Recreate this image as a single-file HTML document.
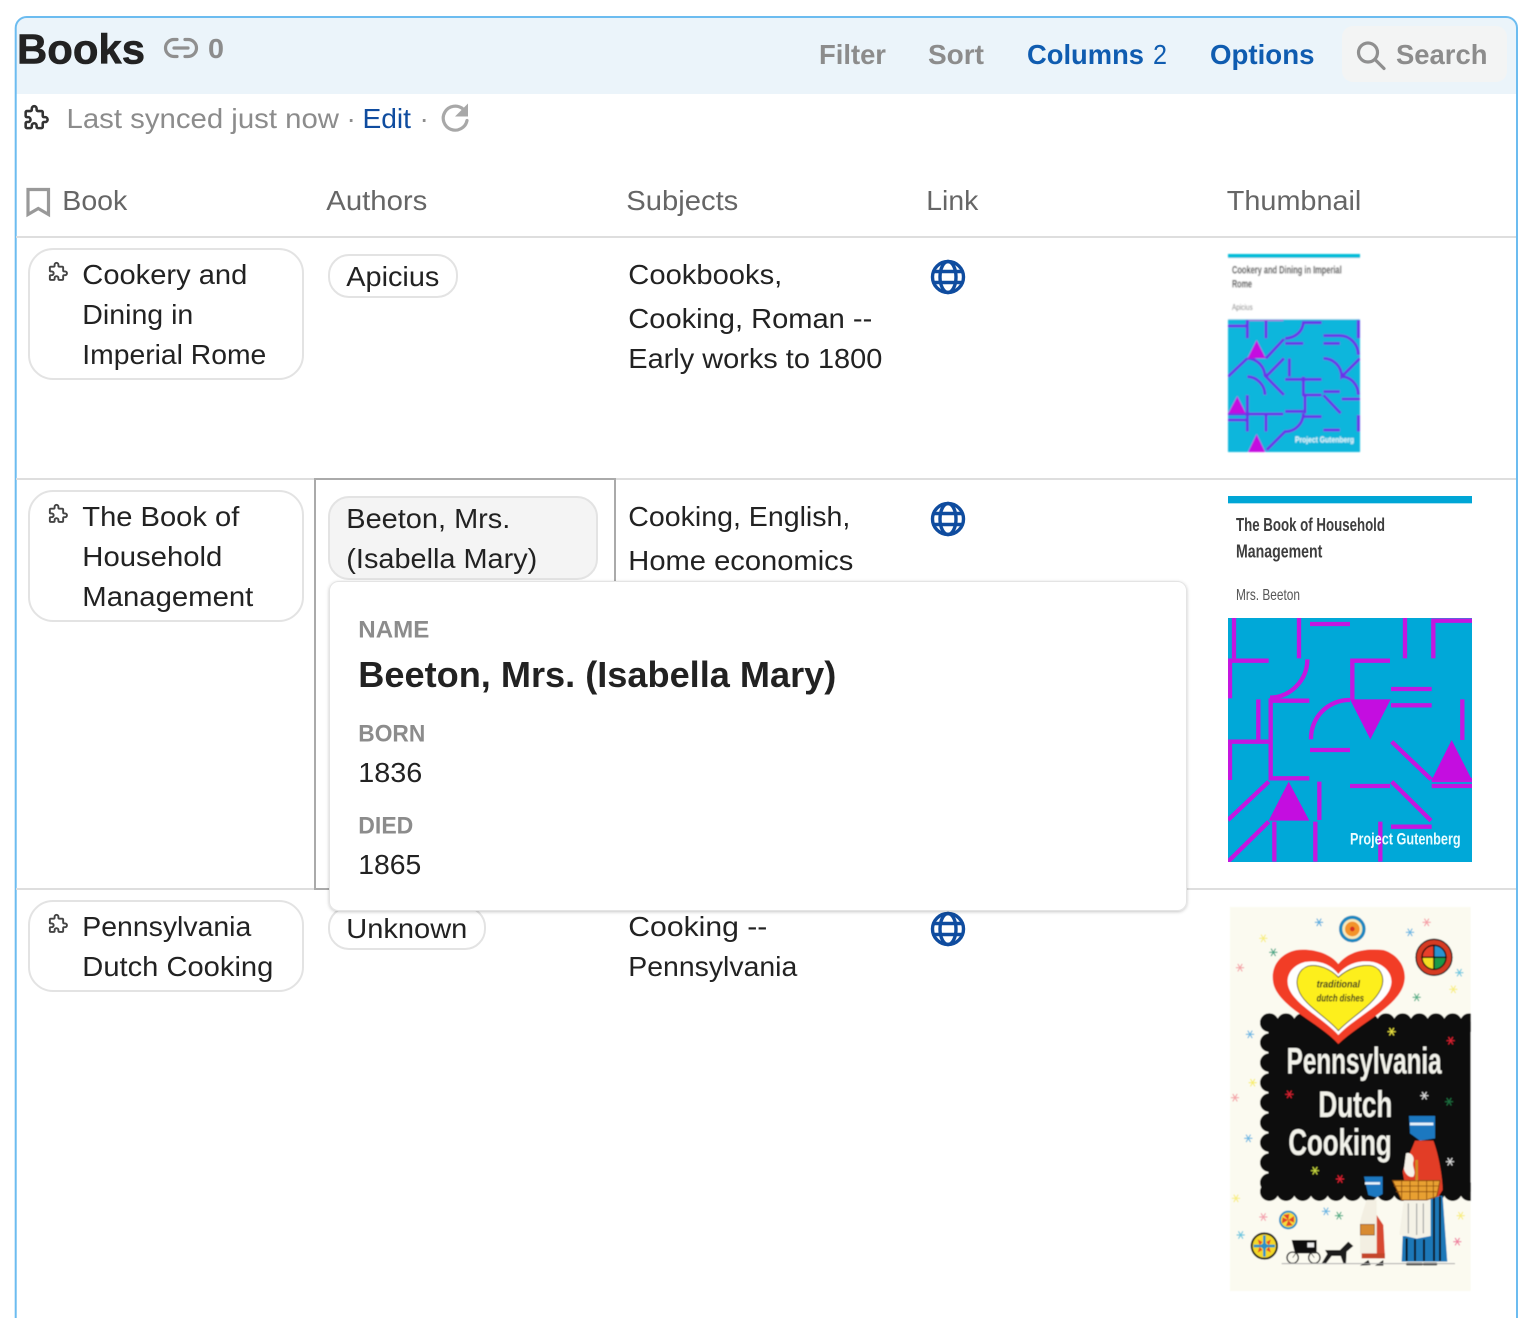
<!DOCTYPE html>
<html lang="en"><head><meta charset="utf-8"><title>Books</title>
<style>
html,body{margin:0;padding:0;background:#fff;width:1530px;height:1318px;overflow:hidden}
svg{display:block}
text{font-family:"Liberation Sans",sans-serif;white-space:pre}
.t{transform:translateX(-.7px)}
.b{font-size:28px;fill:#222}
.h{font-size:28px;fill:#666}
.g{font-size:28px;fill:#8c8c8c}
.l{font-size:24px;fill:#8c8c8c;font-weight:bold}
.i{fill:none;stroke-linecap:round;stroke-linejoin:round}
</style></head><body>
<svg width="1530" height="1318" viewBox="0 0 1530 1318" xmlns="http://www.w3.org/2000/svg">
<defs>
<path id="pz" d="M4 7h3a1 1 0 0 0 1-1v-1a2 2 0 0 1 4 0v1a1 1 0 0 0 1 1h3a1 1 0 0 1 1 1v3a1 1 0 0 0 1 1h1a2 2 0 0 1 0 4h-1a1 1 0 0 0-1 1v3a1 1 0 0 1-1 1h-3a1 1 0 0 1-1-1v-1a2 2 0 0 0-4 0v1a1 1 0 0 1-1 1h-3a1 1 0 0 1-1-1v-3a1 1 0 0 1 1-1h1a2 2 0 0 0 0-4h-1a1 1 0 0 1-1-1v-3a1 1 0 0 1 1-1"/>
<g id="gl" fill="none" stroke="#0f4c9f" stroke-width="3.400"><circle cx="0" cy="0" r="15.500"/><ellipse cx="0" cy="0" rx="8" ry="15.500"/><path d="M-14 -5.500H14M-14 5.500H14"/></g>
<g id="s" stroke-width="3.500" stroke-linecap="round"><path d="M-11 0H11M-6 -10L6 10M-6 10L6 -10"/></g>
<filter id="b0" x="-5%" y="-5%" width="110%" height="110%"><feGaussianBlur stdDeviation="2.600"/></filter>
<filter id="b1" x="-5%" y="-5%" width="110%" height="110%"><feGaussianBlur stdDeviation="1.600"/></filter>
<filter id="b2" x="-5%" y="-5%" width="110%" height="110%"><feGaussianBlur stdDeviation="1.100"/></filter>
<filter id="sh" x="-5%" y="-5%" width="110%" height="110%"><feDropShadow dx="0" dy="1" stdDeviation="1.500" flood-color="#000" flood-opacity=".22"/></filter>
<clipPath id="c1"><rect x="54" y="240" width="396" height="396"/></clipPath>
<clipPath id="c2"><rect x="54" y="414" width="732" height="732"/></clipPath>
<clipPath id="c3"><rect x="30" y="21" width="722" height="1152"/></clipPath>
</defs>

<!-- header -->
<path d="M15.500 28a11 11 0 0 1 11-11H1506a11 11 0 0 1 11 11V94H15.500Z" fill="#ebf4fa"/>
<rect x="15.700" y="17" width="1501.300" height="1330" rx="11" fill="none" stroke="#6cbcf0" stroke-width="2"/>
<g class="t">
<text x="17.700" y="63.500" font-size="42" font-weight="bold" fill="#222" stroke="#222" stroke-width=".6" textLength="128" lengthAdjust="spacingAndGlyphs">Books</text>
<text x="208.700" y="58" font-size="28" font-weight="bold" fill="#8c8c8c" textLength="16" lengthAdjust="spacingAndGlyphs">0</text>
<text x="819.700" y="64" font-size="28" font-weight="bold" fill="#8c8c8c" textLength="67" lengthAdjust="spacingAndGlyphs">Filter</text>
<text x="928.700" y="64" font-size="28" font-weight="bold" fill="#8c8c8c" textLength="56" lengthAdjust="spacingAndGlyphs">Sort</text>
<text x="1027.700" y="64" font-size="28" font-weight="bold" fill="#0f5cb0" textLength="117" lengthAdjust="spacingAndGlyphs">Columns</text>
<text x="1153.700" y="64" font-size="28" fill="#0f5cb0" textLength="14" lengthAdjust="spacingAndGlyphs">2</text>
<text x="1210.700" y="64" font-size="28" font-weight="bold" fill="#0f5cb0" textLength="104.500" lengthAdjust="spacingAndGlyphs">Options</text>
</g>
<g class="i" stroke="#8f8f8f" stroke-width="3.200"><path d="M177 39.500h-3a8.500 8.500 0 0 0 0 17h3M185 39.500h3a8.500 8.500 0 0 1 0 17h-3"/><path d="M174 48h14"/></g>
<rect x="1342" y="26" width="165" height="56" rx="11" fill="#f3f4f4"/>
<g class="i" stroke="#8f8f8f" stroke-width="3.200"><circle cx="1368" cy="52.500" r="9.500"/><path d="M1375.500 60L1384 68.500"/></g>
<text x="1396" y="64" font-size="28" font-weight="bold" fill="#8c8c8c" textLength="91.500" lengthAdjust="spacingAndGlyphs">Search</text>

<!-- sync row -->
<g transform="translate(22,102.500) scale(1.220)"><use href="#pz" class="i" stroke="#333" stroke-width="2.100"/></g>
<text x="66.500" y="128" class="g" textLength="272.500" lengthAdjust="spacingAndGlyphs">Last synced just now</text>
<text x="346.500" y="128" class="g">·</text>
<text x="362.500" y="128" font-size="28" fill="#0f4c9f" textLength="48.500" lengthAdjust="spacingAndGlyphs">Edit</text>
<text x="419.500" y="128" class="g">·</text>
<g class="i" stroke="#a8a8a8" stroke-width="3.200"><path d="M463 109A12 12 0 1 0 467 120.500"/></g>
<path d="M468 103.500V116.500H455Z" fill="#a8a8a8"/>

<!-- column headers -->
<path d="M28 189.500H48.500V214.500L38.250 208.500L28 214.500Z" fill="none" stroke="#999" stroke-width="3.200"/>
<g class="t">
<text x="63" y="210" class="h" textLength="65" lengthAdjust="spacingAndGlyphs">Book</text>
<text x="327" y="210" class="h" textLength="101" lengthAdjust="spacingAndGlyphs">Authors</text>
<text x="627" y="210" class="h" textLength="112" lengthAdjust="spacingAndGlyphs">Subjects</text>
<text x="927" y="210" class="h" textLength="52" lengthAdjust="spacingAndGlyphs">Link</text>
<text x="1227.500" y="210" class="h" textLength="134.500" lengthAdjust="spacingAndGlyphs">Thumbnail</text>
</g>
<rect x="16" y="236" width="1500" height="2" fill="#dedede"/>
<rect x="16" y="478" width="1500" height="2" fill="#dedede"/>
<rect x="16" y="888" width="1500" height="2" fill="#dedede"/>

<!-- row 1 -->
<rect x="29" y="249" width="274" height="130" rx="24" fill="#fff" stroke="#e3e3e3" stroke-width="2"/>
<g transform="translate(47,260) scale(.95)"><use href="#pz" class="i" stroke="#444" stroke-width="2"/></g>
<g class="t">
<text x="83" y="284" class="b" textLength="165" lengthAdjust="spacingAndGlyphs">Cookery and</text>
<text x="83" y="324" class="b" textLength="111" lengthAdjust="spacingAndGlyphs">Dining in</text>
<text x="83" y="364" class="b" textLength="184" lengthAdjust="spacingAndGlyphs">Imperial Rome</text>
</g>
<rect x="329" y="255" width="128" height="42" rx="20" fill="#fff" stroke="#e3e3e3" stroke-width="2"/>
<g class="t">
<text x="347" y="286" class="b" textLength="93" lengthAdjust="spacingAndGlyphs">Apicius</text>
<text x="629" y="284" class="b" textLength="154" lengthAdjust="spacingAndGlyphs">Cookbooks,</text>
<text x="629" y="328" class="b" textLength="244" lengthAdjust="spacingAndGlyphs">Cooking, Roman --</text>
<text x="629" y="368" class="b" textLength="254" lengthAdjust="spacingAndGlyphs">Early works to 1800</text>
</g>
<use href="#gl" x="948" y="277"/>

<!-- thumb 1 -->
<g transform="translate(1210,240) scale(.33333)" filter="url(#b0)">
<rect x="54" y="42" width="396" height="198" fill="#fff"/>
<rect x="54" y="42" width="396" height="12" fill="#00bcd8"/>
<text x="66" y="100" font-size="32" font-weight="bold" fill="#333" textLength="329" lengthAdjust="spacingAndGlyphs">Cookery and Dining in Imperial</text>
<text x="66" y="142" font-size="32" font-weight="bold" fill="#333" textLength="60" lengthAdjust="spacingAndGlyphs">Rome</text>
<text x="66" y="210" font-size="24" fill="#777" textLength="62" lengthAdjust="spacingAndGlyphs">Apicius</text>
<rect x="54" y="238" width="396" height="398" fill="#08b6dc"/>
<g clip-path="url(#c1)">
<path fill="none" stroke="#6a30e8" stroke-width="9" d="M54 258H110M112 240V295M168 240V295M225 295A55 50 0 0 0 280 248H335M225 310H280M340 287H390M340 310H390M390 287A55 58 0 0 1 445 345M445 240V295M54 410L112 355M168 355L222 297M112 355A55 55 0 0 1 165 410M222 355L168 410L222 465M238 355V410M225 418H335M280 410V465H335M285 465V520M340 355A55 55 0 0 1 395 410L450 355M395 410A50 55 0 0 1 445 465M112 410A55 55 0 0 1 165 465M340 455H390M395 477H450M340 465L392 520M112 465V575M54 522H220M54 540H110M168 520V575M225 514H280M280 530H335M280 520A55 55 0 0 1 225 575L170 630M445 525V575M340 570H390"/>
<path d="M115 240H220" stroke="#d418d8" stroke-width="5"/>
<path d="M112 355H168L140 300ZM54 520H108L82 468ZM112 640H168L140 582Z" fill="#c40ce0"/>
</g>
<text x="255" y="607" font-size="26" font-weight="bold" fill="#f4feff" textLength="177" lengthAdjust="spacingAndGlyphs">Project Gutenberg</text>
</g>

<!-- row 2 -->
<rect x="29" y="491" width="274" height="130" rx="24" fill="#fff" stroke="#e3e3e3" stroke-width="2"/>
<g transform="translate(47,502) scale(.95)"><use href="#pz" class="i" stroke="#444" stroke-width="2"/></g>
<g class="t">
<text x="83" y="526" class="b" textLength="157" lengthAdjust="spacingAndGlyphs">The Book of</text>
<text x="83" y="566" class="b" textLength="140" lengthAdjust="spacingAndGlyphs">Household</text>
<text x="83" y="606" class="b" textLength="171" lengthAdjust="spacingAndGlyphs">Management</text>
</g>
<rect x="315" y="479" width="300" height="410" fill="none" stroke="#aaa" stroke-width="2"/>
<rect x="329" y="497" width="268" height="82" rx="20" fill="#f4f4f4" stroke="#e3e3e3" stroke-width="2"/>
<g class="t">
<text x="347" y="528" class="b" textLength="164" lengthAdjust="spacingAndGlyphs">Beeton, Mrs.</text>
<text x="347" y="568" class="b" textLength="191" lengthAdjust="spacingAndGlyphs">(Isabella Mary)</text>
<text x="629" y="526" class="b" textLength="222" lengthAdjust="spacingAndGlyphs">Cooking, English,</text>
<text x="629" y="570" class="b" textLength="225" lengthAdjust="spacingAndGlyphs">Home economics</text>
</g>
<use href="#gl" x="948" y="519"/>

<!-- thumb 2 -->
<g transform="translate(1210,480) scale(.33333)" filter="url(#b2)">
<rect x="54" y="48" width="732" height="366" fill="#fff"/>
<rect x="54" y="48" width="732" height="22" fill="#00a6d6"/>
<text x="78" y="153" font-size="56" font-weight="bold" fill="#3c3c3c" textLength="447" lengthAdjust="spacingAndGlyphs">The Book of Household</text>
<text x="78" y="233" font-size="56" font-weight="bold" fill="#3c3c3c" textLength="259" lengthAdjust="spacingAndGlyphs">Management</text>
<text x="78" y="360" font-size="48" fill="#555" textLength="192" lengthAdjust="spacingAndGlyphs">Mrs. Beeton</text>
<rect x="54" y="414" width="732" height="732" fill="#00a8d8"/>
<g clip-path="url(#c2)">
<path fill="none" stroke="#c416e0" stroke-width="13" d="M72 414V535M267 414V535M300 432H420M585 414V535M670 535V422H786M54 542H176M60 542V655M292 538A115 115 0 0 1 180 653M180 662H298M182 655V900M145 658V780M54 785H180M60 785V900M180 895H298M427 660V542H540M543 627H665M543 676H665M757 658V780M303 778A115 115 0 0 1 420 660M300 810H420M545 785L663 898M665 918H786M420 918H540M545 905L663 1022M328 905V1020M54 1020L176 905M54 1145L176 1025M193 1025V1145M316 1025V1145M511 1025V1145M543 1040H665M665 900H786"/>
<path d="M420 658H542L481 778ZM665 900H786L725 780ZM176 1022H298L236 905Z" fill="#c40ce0"/>
</g>
<text x="420" y="1093" font-size="50" font-weight="bold" fill="#eafcff" textLength="332" lengthAdjust="spacingAndGlyphs">Project Gutenberg</text>
</g>

<!-- row 3 -->
<rect x="29" y="901" width="274" height="90" rx="24" fill="#fff" stroke="#e3e3e3" stroke-width="2"/>
<g transform="translate(47,912) scale(.95)"><use href="#pz" class="i" stroke="#444" stroke-width="2"/></g>
<g class="t">
<text x="83" y="936" class="b" textLength="169" lengthAdjust="spacingAndGlyphs">Pennsylvania</text>
<text x="83" y="976" class="b" textLength="191" lengthAdjust="spacingAndGlyphs">Dutch Cooking</text>
</g>
<rect x="329" y="907" width="156" height="42" rx="20" fill="#fff" stroke="#e3e3e3" stroke-width="2"/>
<g class="t">
<text x="347" y="938" class="b" textLength="121" lengthAdjust="spacingAndGlyphs">Unknown</text>
<text x="629" y="936" class="b" textLength="139" lengthAdjust="spacingAndGlyphs">Cooking --</text>
<text x="629" y="976" class="b" textLength="169" lengthAdjust="spacingAndGlyphs">Pennsylvania</text>
</g>
<use href="#gl" x="948" y="929"/>

<!-- thumb 3 -->
<g transform="translate(1220,900) scale(.33333)" filter="url(#b1)">
<rect x="30" y="21" width="722" height="1152" fill="#fbfaf0"/>
<g clip-path="url(#c3)">
<rect x="145" y="365" width="607" height="510" fill="#0a0a0a"/>
<path d="M148 368H750M148 875H750" fill="none" stroke="#0a0a0a" stroke-width="56" stroke-linecap="round" stroke-dasharray="0 50"/>
<path d="M148 368V875" fill="none" stroke="#0a0a0a" stroke-width="56" stroke-linecap="round" stroke-dasharray="0 60"/>
<path d="M355 192C390 150 440 145 490 150C540 165 562 210 552 250C535 320 420 370 355 432C300 370 175 320 160 250C150 200 180 160 230 150C280 145 330 160 355 192Z" fill="#f23c28"/>
<path d="M355 222C385 186 425 180 460 186C500 196 522 228 512 260C498 312 405 352 355 405C310 355 220 312 205 260C196 228 215 196 255 186C295 180 330 190 355 222Z" fill="#fff"/>
<path d="M355 232C385 204 425 192 458 198C488 208 495 240 482 268C460 315 395 350 355 392C320 350 250 315 235 268C225 240 235 208 265 198C295 192 330 206 355 232Z" fill="#fdef1a" stroke="#4a3c10" stroke-width="2.500"/>
<text x="290" y="262" font-family="Liberation Serif" font-style="italic" font-weight="bold" font-size="30" fill="#222" textLength="130" lengthAdjust="spacingAndGlyphs">traditional</text>
<text x="290" y="305" font-family="Liberation Serif" font-style="italic" font-weight="bold" font-size="30" fill="#222" textLength="142" lengthAdjust="spacingAndGlyphs">dutch dishes</text>
<text x="200" y="520" font-family="Liberation Serif" font-weight="bold" font-size="112" fill="#f2f2ea" textLength="465" lengthAdjust="spacingAndGlyphs">Pennsylvania</text>
<text x="295" y="651" font-family="Liberation Serif" font-weight="bold" font-size="112" fill="#f2f2ea" textLength="222" lengthAdjust="spacingAndGlyphs">Dutch</text>
<text x="205" y="765" font-family="Liberation Serif" font-weight="bold" font-size="112" fill="#f2f2ea" textLength="310" lengthAdjust="spacingAndGlyphs">Cooking</text>

<!-- medallions -->
<circle cx="397" cy="87" r="35" fill="#f7e9b8" stroke="#1e88c0" stroke-width="10"/>
<circle cx="397" cy="87" r="22" fill="#f2932a"/><circle cx="397" cy="87" r="7" fill="#d83020"/>
<circle cx="642" cy="172" r="54" fill="#d63a24" stroke="#1a1a1a" stroke-width="4"/>
<path d="M642 172V136A36 36 0 0 0 606 172Z" fill="#e8402a" stroke="#111" stroke-width="4"/>
<path d="M642 172V136A36 36 0 0 1 678 172Z" fill="#2a93d0" stroke="#111" stroke-width="4"/>
<path d="M642 172V208A36 36 0 0 1 606 172Z" fill="#f5df22" stroke="#111" stroke-width="4"/>
<path d="M642 172V208A36 36 0 0 0 678 172Z" fill="#1e9a48" stroke="#111" stroke-width="4"/>
<circle cx="205" cy="960" r="25" fill="#f6dc3a" stroke="#2a92c8" stroke-width="6"/>
<path d="M205 960L190 945L208 942ZM205 960L222 948L222 968ZM205 960L218 976L198 978ZM205 960L186 970L188 952Z" fill="#e2452a"/>
<circle cx="133" cy="1038" r="38" fill="#f5d928" stroke="#1a1a1a" stroke-width="6"/>
<path d="M133 1006V1070M101 1038H165" stroke="#2a92c8" stroke-width="8"/>
<circle cx="133" cy="1038" r="9" fill="#2a92c8"/>
<path d="M113 1018l14 8-8 10zM153 1018l-14 8 8 10zM113 1058l14-8-8-10zM153 1058l-14-8 8-10z" fill="#e2452a"/>

<!-- stars -->
<use href="#s" x="297" y="67" stroke="#5aaee0"/><use href="#s" x="620" y="67" stroke="#f6a0a8"/><use href="#s" x="570" y="97" stroke="#6bb8e4"/><use href="#s" x="130" y="115" stroke="#f8ee80"/><use href="#s" x="160" y="157" stroke="#4aa888"/><use href="#s" x="60" y="203" stroke="#f4a4a8"/><use href="#s" x="718" y="218" stroke="#6cc8e0"/><use href="#s" x="700" y="268" stroke="#f8ee80"/><use href="#s" x="590" y="292" stroke="#55b088"/><use href="#s" x="90" y="403" stroke="#6bb8e4"/><use href="#s" x="98" y="548" stroke="#f8ee70"/><use href="#s" x="45" y="593" stroke="#f4a4a8"/><use href="#s" x="515" y="395" stroke="#e8e040"/><use href="#s" x="692" y="422" stroke="#d82030"/><use href="#s" x="208" y="583" stroke="#d82030"/><use href="#s" x="613" y="587" stroke="#d8d8d8"/><use href="#s" x="687" y="605" stroke="#1e6e40"/><use href="#s" x="85" y="715" stroke="#6bb8e4"/><use href="#s" x="285" y="812" stroke="#c8d840"/><use href="#s" x="360" y="837" stroke="#d82030"/><use href="#s" x="690" y="785" stroke="#d8d8d8"/><use href="#s" x="130" y="951" stroke="#f4a4b0"/><use href="#s" x="318" y="934" stroke="#6bb8e4"/><use href="#s" x="357" y="947" stroke="#55b088"/><use href="#s" x="62" y="1005" stroke="#6cc8e0"/><use href="#s" x="722" y="947" stroke="#f8ee80"/><use href="#s" x="712" y="1025" stroke="#f080a0"/><use href="#s" x="48" y="895" stroke="#f8ee80"/>

<!-- large woman -->
<path d="M620 888L668 888L682 1085H545L548 1008H630Z" fill="#1f78b8"/>
<path d="M560 1015V1083M585 1018V1083M612 1018V1083M642 890V1083M660 890V1083" stroke="#101010" stroke-width="6"/>
<path d="M552 895H632L632 1008L590 1016L538 1004Z" fill="#f4f2e6"/>
<path d="M565 910V1000M590 910V1005M610 910V1000" stroke="#999" stroke-width="3"/>
<path d="M585 722H640C655 760 668 830 668 870L655 890H560L548 815C555 790 570 760 585 722Z" fill="#e23c26"/>
<path d="M558 760C572 755 585 770 580 785C575 800 590 815 580 830C565 835 552 815 552 805Z" fill="#f6f2e8"/>
<path d="M518 842H660L650 890L620 900H545Z" fill="#e8a030" stroke="#8a4c10" stroke-width="3"/>
<path d="M522 858H655M528 875H650M545 842V898M570 842V898M595 842V898M620 842V898M640 842V895" stroke="#8a4c10" stroke-width="2.500"/>
<path d="M590 842V780" stroke="#d08a20" stroke-width="8"/>
<path d="M567 648H645V715L600 722L570 700Z" fill="#1c78c0"/>
<path d="M570 672H640" stroke="#eaf4fa" stroke-width="8"/>
<path d="M562 1092H605M612 1092H648" stroke="#111" stroke-width="8" stroke-linecap="round"/>

<!-- small woman -->
<path d="M432 830H488V882L470 892L445 885Z" fill="#1c78c0"/>
<path d="M435 850H480" stroke="#eaf4fa" stroke-width="7"/>
<path d="M470 945L490 975L495 1075H470Z" fill="#d84a30"/>
<path d="M440 900C430 930 420 960 420 975V1060H470V900Z" fill="#f3efe2"/>
<rect x="421" y="973" width="42" height="32" fill="#d88a30" stroke="#7a4410" stroke-width="2"/>
<path d="M425 1060H495V1075H425Z" fill="#c4452c"/>
<path d="M420 1097L445 1080L452 1095ZM465 1097L490 1080V1097Z" fill="#111"/>

<!-- buggy and horse -->
<path d="M215 1020H290V1060H225Z" fill="#111"/>
<rect x="262" y="1028" width="20" height="14" fill="#eee"/>
<circle cx="218" cy="1073" r="17" fill="none" stroke="#222" stroke-width="4"/>
<circle cx="283" cy="1073" r="17" fill="none" stroke="#222" stroke-width="4"/>
<path d="M218 1073l10-14M283 1073l-10-14" stroke="#222" stroke-width="2"/>
<path d="M315 1050H360L385 1025L400 1038L380 1055L378 1090H370L362 1068H335L318 1090H305L322 1062Z" fill="#1a1a1a"/>
<path d="M185 1091H705" stroke="#aaa" stroke-width="3"/>
</g>
</g>

<!-- popup -->
<rect x="329.500" y="581.500" width="857" height="329" rx="9" fill="#fff" stroke="#e4e4e4" stroke-width="1" filter="url(#sh)"/>
<g class="t">
<text x="359" y="637.500" class="l" textLength="71" lengthAdjust="spacingAndGlyphs">NAME</text>
<text x="359" y="687" font-size="36" font-weight="bold" fill="#222" textLength="478" lengthAdjust="spacingAndGlyphs">Beeton, Mrs. (Isabella Mary)</text>
<text x="359" y="741.500" class="l" textLength="67" lengthAdjust="spacingAndGlyphs">BORN</text>
<text x="359" y="782" class="b" textLength="64" lengthAdjust="spacingAndGlyphs">1836</text>
<text x="359" y="833.500" class="l" textLength="55" lengthAdjust="spacingAndGlyphs">DIED</text>
<text x="359" y="874" class="b" textLength="63" lengthAdjust="spacingAndGlyphs">1865</text>
</g>
</svg>
</body></html>
